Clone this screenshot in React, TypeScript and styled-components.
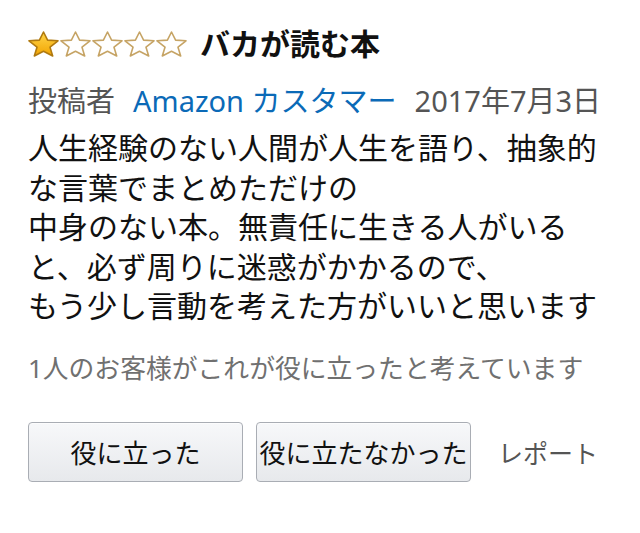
import React from "react";
import styled, { createGlobalStyle } from "styled-components";

const Global = createGlobalStyle`
  html, body { margin: 0; padding: 0; background: #ffffff; }
  body { font-family: "Noto Sans", "Noto Sans CJK JP", sans-serif; color: #111111; }
`;

const Review = styled.div`
  padding: 24px 0 0 28px;
`;

const Header = styled.div`
  display: flex;
  align-items: center;
  height: 40px;
`;

const Stars = styled.div`
  display: flex;
  gap: 1px;
`;

const Title = styled.h1`
  margin: 0 0 0 13px;
  font-size: 30px;
  line-height: 40px;
  font-weight: 700;
  color: #111111;
`;

const Meta = styled.div`
  display: flex;
  align-items: baseline;
  margin-top: 18px;
  font-size: 29px;
  line-height: 38px;
  color: #555555;
  white-space: nowrap;
`;

const Author = styled.span`
  margin: 0 18px 0 18px;
  color: #0b6ab7;
`;

const Body = styled.p`
  margin: 8px 0 0 0;
  font-size: 30px;
  line-height: 39.5px;
  color: #111111;
  white-space: nowrap;
`;

const Helpful = styled.div`
  margin-top: 25px;
  font-size: 25.8px;
  line-height: 34px;
  color: #707070;
  white-space: nowrap;
`;

const Actions = styled.div`
  display: flex;
  align-items: center;
  gap: 13px;
  margin-top: 37px;
`;

const VoteButton = styled.button`
  width: 215px;
  height: 60px;
  padding: 0;
  border: 1px solid #a9adb4;
  border-radius: 4px;
  background: linear-gradient(to bottom, #f7f8fa, #e7e9ec);
  box-shadow: 0 1px 0 rgba(255, 255, 255, 0.6) inset;
  font-family: "Noto Sans", "Noto Sans CJK JP", sans-serif;
  font-size: 26px;
  color: #111111;
  white-space: nowrap;
`;

const Report = styled.span`
  margin-left: 14px;
  font-size: 25px;
  color: #555555;
`;

const Star: React.FC<{ filled: boolean }> = ({ filled }) => (
  <svg width="31" height="26" viewBox="0 0 31 26">
    <defs>
      <linearGradient id="gold" x1="0" y1="0" x2="0" y2="1">
        <stop offset="0" stopColor="#ffd54a" />
        <stop offset="1" stopColor="#f2a400" />
      </linearGradient>
    </defs>
    <polygon
      points="15.5,1 19.6,9.1 30,9.8 22,16.2 24.7,25 15.5,20.2 6.3,25 9,16.2 1,9.8 11.4,9.1"
      fill={filled ? "url(#gold)" : "#ffffff"}
      stroke={filled ? "#b07a10" : "#c6a465"}
      strokeWidth="1.6"
      strokeLinejoin="round"
    />
  </svg>
);

export default function App() {
  const rating = 1;
  return (
    <>
      <Global />
      <Review>
        <Header>
          <Stars>
            {[0, 1, 2, 3, 4].map((i) => (
              <Star key={i} filled={i < rating} />
            ))}
          </Stars>
          <Title>バカが読む本</Title>
        </Header>
        <Meta>
          <span>投稿者</span>
          <Author>Amazon カスタマー</Author>
          <span>2017年7月3日</span>
        </Meta>
        <Body>
          人生経験のない人間が人生を語り、抽象的
          <br />
          な言葉でまとめただけの
          <br />
          中身のない本。無責任に生きる人がいる
          <br />
          と、必ず周りに迷惑がかかるので、
          <br />
          もう少し言動を考えた方がいいと思います
        </Body>
        <Helpful>1人のお客様がこれが役に立ったと考えています</Helpful>
        <Actions>
          <VoteButton>役に立った</VoteButton>
          <VoteButton>役に立たなかった</VoteButton>
          <Report>レポート</Report>
        </Actions>
      </Review>
    </>
  );
}
